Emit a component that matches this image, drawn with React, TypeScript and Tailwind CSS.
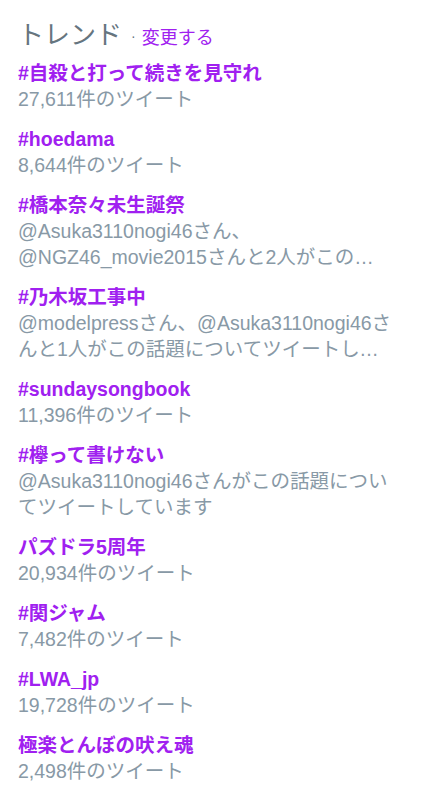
const trends = [
  { name: "#自殺と打って続きを見守れ", meta: "27,611件のツイート" },
  { name: "#hoedama", meta: "8,644件のツイート" },
  {
    name: "#橋本奈々未生誕祭",
    meta: "@Asuka3110nogi46さん、@NGZ46_movie2015さんと2人がこの話題についてツイートしています",
  },
  {
    name: "#乃木坂工事中",
    meta: "@modelpressさん、@Asuka3110nogi46さんと1人がこの話題についてツイートしています",
  },
  { name: "#sundaysongbook", meta: "11,396件のツイート" },
  { name: "#欅って書けない", meta: "@Asuka3110nogi46さんがこの話題についてツイートしています" },
  { name: "パズドラ5周年", meta: "20,934件のツイート" },
  { name: "#関ジャム", meta: "7,482件のツイート" },
  { name: "#LWA_jp", meta: "19,728件のツイート" },
  { name: "極楽とんぼの吠え魂", meta: "2,498件のツイート" },
];

export default function App() {
  return (
    <div
      className="min-h-screen bg-white pl-[18px] pr-[30px] pt-[19px] pb-6"
      style={{ fontFamily: '"Liberation Sans", Arial, "Noto Sans CJK JP", sans-serif' }}
    >
      {/* ヘッダー */}
      <div className="mb-[5px] flex items-baseline leading-[32px]">
        <h3 className="text-[26px] text-[#66757f]">トレンド</h3>
        <span className="relative -top-[3px] ml-[9px] text-[14px] text-[#66757f]">·</span>
        <a className="ml-[6px] text-[18px] text-[#a020f0]">変更する</a>
      </div>

      {/* トレンド一覧 */}
      <ul className="flex flex-col gap-[14px]">
        {trends.map((t) => (
          <li key={t.name} className="text-[19.5px] leading-[26px]">
            <div className="font-bold text-[#a020f0]">{t.name}</div>
            <div className="line-clamp-2 text-[#8899a6]">{t.meta}</div>
          </li>
        ))}
      </ul>
    </div>
  );
}
